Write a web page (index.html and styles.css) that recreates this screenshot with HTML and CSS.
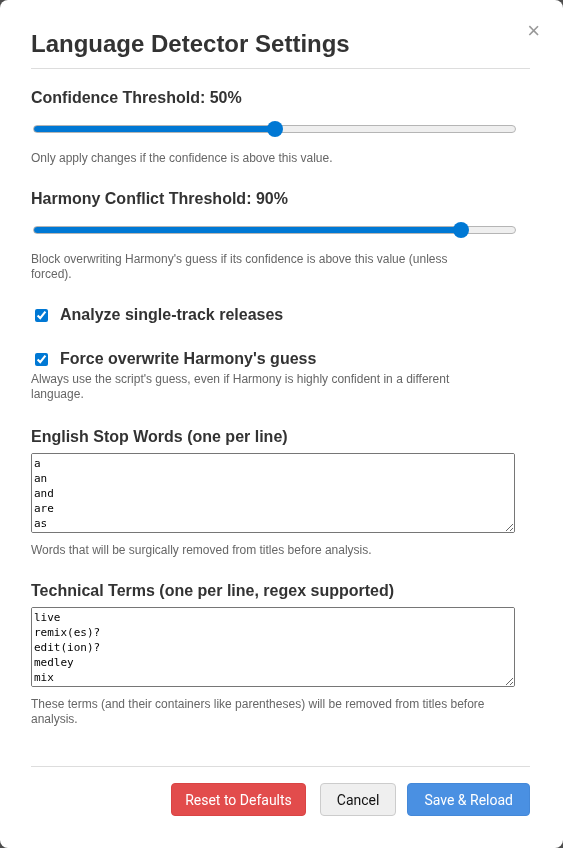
FILE: index.html
```html
<!DOCTYPE html>
<html lang="en">
<head>
    <meta charset="UTF-8">
    <meta name="viewport" content="width=device-width, initial-scale=1.0">
    <title>Language Detector Settings</title>
    <link rel="stylesheet" href="styles.css">
</head>
<body>
    <div class="modal">
        <button class="close-btn" title="Close">&times;</button>
        <div class="modal-header">
            <h2>Language Detector Settings</h2>
        </div>

        <div class="modal-body">
            <div class="field">
                <label for="confidence">Confidence Threshold: <span id="confidence-value">50</span>%</label>
                <input type="range" id="confidence" class="slider" min="0" max="100" value="50" style="--fill: 50%">
                <p class="help after-slider">Only apply changes if the confidence is above this value.</p>
            </div>

            <div class="field">
                <label for="conflict">Harmony Conflict Threshold: <span id="conflict-value">90</span>%</label>
                <input type="range" id="conflict" class="slider" min="0" max="100" value="90" style="--fill: 90%">
                <p class="help after-slider">Block overwriting Harmony's guess if its confidence is above this value (unless forced).</p>
            </div>

            <div class="field check-field">
                <label class="check-label"><input type="checkbox" id="single-track" checked>Analyze single-track releases</label>
            </div>

            <div class="field check-field">
                <label class="check-label"><input type="checkbox" id="force-overwrite" checked>Force overwrite Harmony's guess</label>
                <p class="help after-check">Always use the script's guess, even if Harmony is highly confident in a different language.</p>
            </div>

            <div class="field">
                <label for="stop-words" class="area-label">English Stop Words (one per line)</label>
                <textarea id="stop-words" rows="5">a
an
and
are
as
at
be
by
for
from</textarea>
                <p class="help after-area">Words that will be surgically removed from titles before analysis.</p>
            </div>

            <div class="field">
                <label for="tech-terms" class="area-label">Technical Terms (one per line, regex supported)</label>
                <textarea id="tech-terms" rows="5">live
remix(es)?
edit(ion)?
medley
mix
version
instrumental</textarea>
                <p class="help after-area">These terms (and their containers like parentheses) will be removed from titles before analysis.</p>
            </div>
        </div>

        <div class="modal-footer">
            <button class="btn btn-reset">Reset to Defaults</button>
            <button class="btn btn-cancel">Cancel</button>
            <button class="btn btn-save">Save &amp; Reload</button>
        </div>
    </div>

    <script>
        document.querySelectorAll('.slider').forEach(function (slider) {
            slider.addEventListener('input', function () {
                this.style.setProperty('--fill', this.value + '%');
                document.getElementById(this.id + '-value').textContent = this.value;
            });
        });
    </script>
</body>
</html>
```

FILE: styles.css
```css
body {
    font-family: "Liberation Sans", Arial, sans-serif;
    margin: 0;
    background-color: #4d4d4d;
    color: #333;
}
.modal {
    position: relative;
    box-sizing: border-box;
    height: 848px;
    background-color: #fff;
    border-radius: 8px;
    padding: 30px 33px 0 31px;
}
.close-btn {
    position: absolute;
    top: 18px;
    right: 23px;
    background: none;
    border: none;
    padding: 0;
    font-family: "Liberation Sans", Arial, sans-serif;
    font-size: 22px;
    color: #999;
    cursor: pointer;
}
.modal-header {
    border-bottom: 1px solid #ddd;
    padding-bottom: 10px;
}
.modal-header h2 {
    margin: 0;
    font-size: 24px;
    font-weight: bold;
    color: #333;
}
.modal-body {
    padding: 20px 15px 0 0;
    height: 697px;
    box-sizing: border-box;
}
.field {
    margin-bottom: 24px;
}
.check-field {
    margin-bottom: 26px;
}
.field label {
    display: block;
    font-size: 16px;
    font-weight: bold;
    margin-bottom: 14px;
}
.field label.area-label {
    margin-bottom: 7px;
}

/* range slider */
.slider {
    -webkit-appearance: none;
    appearance: none;
    display: block;
    width: calc(100% - 1px);
    height: 16px;
    margin: 0 0 0 2px;
    background: transparent;
}
.slider::-webkit-slider-runnable-track {
    height: 8px;
    box-sizing: border-box;
    border: 1px solid #b5b5b5;
    border-radius: 4px;
    background: linear-gradient(to right, #0078d4 var(--fill), #efefef var(--fill));
}
.slider::-webkit-slider-thumb {
    -webkit-appearance: none;
    width: 16px;
    height: 16px;
    margin-top: -5px;
    border-radius: 50%;
    background: #0078d4;
    border: none;
}

.check-label {
    display: flex !important;
    align-items: center;
    margin-bottom: 0 !important;
}
.check-label input {
    width: 13px;
    height: 13px;
    margin: 0 12px 0 4px;
    accent-color: #0078d4;
}
textarea {
    display: block;
    box-sizing: border-box;
    width: 100%;
    height: 80px;
    padding: 2px;
    border: 1px solid #767676;
    border-radius: 2px;
    font-family: "DejaVu Sans Mono", monospace;
    font-size: 11px;
    line-height: 15px;
    color: #000;
    resize: vertical;
}
.help {
    margin: 0;
    max-width: 458px;
    font-size: 12px;
    line-height: 15px;
    color: #666;
}
.help.after-slider {
    margin-top: 14px;
}
.help.after-check {
    margin-top: 4px;
}
.help.after-area {
    margin-top: 10px;
}
.modal-footer {
    border-top: 1px solid #ddd;
    padding-top: 16px;
    display: flex;
    justify-content: flex-end;
}
.btn {
    font-family: Roboto, "Liberation Sans", sans-serif;
    font-size: 14px;
    padding: 0 16px;
    height: 33px;
    border-radius: 4px;
    cursor: pointer;
}
.btn-reset {
    padding: 0 13px;
    background-color: #e24c4c;
    border: 1px solid #d94444;
    color: #fff;
    margin-right: 14px;
}
.btn-cancel {
    background-color: #efefef;
    border: 1px solid #ccc;
    color: #111;
    margin-right: 11px;
}
.btn-save {
    background-color: #4a90e2;
    border: 1px solid #4488d8;
    color: #fff;
}
```
